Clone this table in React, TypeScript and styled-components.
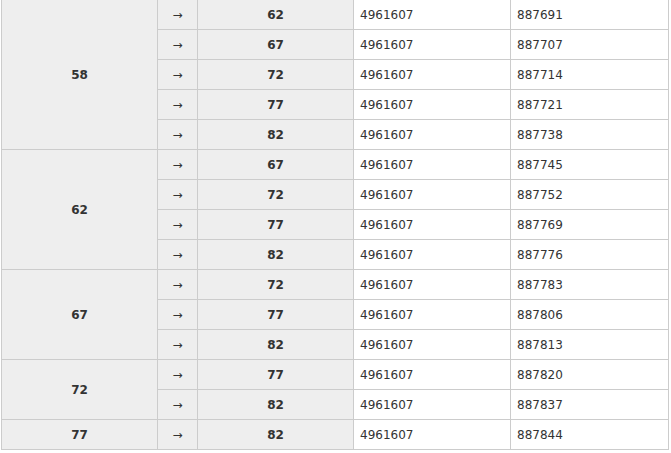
import React from 'react';
import styled, { createGlobalStyle } from 'styled-components';

const GlobalStyle = createGlobalStyle`
  html, body {
    margin: 0;
    padding: 0;
    background: #ffffff;
  }
  body {
    font-family: 'DejaVu Sans', Verdana, sans-serif;
    font-size: 12px;
    color: #333333;
  }
`;

const Wrap = styled.div`
  padding-left: 1px;
  margin-top: -1px;
`;

const Table = styled.table`
  border-collapse: collapse;
  table-layout: fixed;
  width: 667px;
`;

const Col = styled.col<{ $w: number }>`
  width: ${p => p.$w}px;
`;

const Row = styled.tr`
  height: 30px;
`;

const Cell = styled.td<{ $grey?: boolean; $bold?: boolean; $center?: boolean }>`
  padding: 0 6px;
  border: 1px solid #cccccc;
  background: ${p => (p.$grey ? '#eeeeee' : '#ffffff')};
  font-weight: ${p => (p.$bold ? 700 : 400)};
  text-align: ${p => (p.$center ? 'center' : 'left')};
  vertical-align: middle;
  line-height: 14px;
  color: #333333;
  white-space: nowrap;
`;

type Group = {
  from: number,
  rows: { to: number, b: string }[]
}

const groups: Group[] = [
  { from: 58, rows: [
    { to: 62, b: '887691' },
    { to: 67, b: '887707' },
    { to: 72, b: '887714' },
    { to: 77, b: '887721' },
    { to: 82, b: '887738' },
  ]},
  { from: 62, rows: [
    { to: 67, b: '887745' },
    { to: 72, b: '887752' },
    { to: 77, b: '887769' },
    { to: 82, b: '887776' },
  ]},
  { from: 67, rows: [
    { to: 72, b: '887783' },
    { to: 77, b: '887806' },
    { to: 82, b: '887813' },
  ]},
  { from: 72, rows: [
    { to: 77, b: '887820' },
    { to: 82, b: '887837' },
  ]},
  { from: 77, rows: [
    { to: 82, b: '887844' },
  ]},
];

export default function App(): React.ReactElement {
  return (
    <>
      <GlobalStyle />
      <Wrap>
        <Table>
          <colgroup>
            <Col $w={156} />
            <Col $w={40} />
            <Col $w={156} />
            <Col $w={157} />
            <Col $w={158} />
          </colgroup>
          <tbody>
            {groups.map(g =>
              g.rows.map((r, i) => (
                <Row key={g.from + '-' + r.to}>
                  {i === 0 ? (
                    <Cell $grey $bold $center rowSpan={g.rows.length}>{g.from}</Cell>
                  ) : null}
                  <Cell $grey $center>→</Cell>
                  <Cell $grey $bold $center>{r.to}</Cell>
                  <Cell>4961607</Cell>
                  <Cell>{r.b}</Cell>
                </Row>
              ))
            )}
          </tbody>
        </Table>
      </Wrap>
    </>
  );
}
